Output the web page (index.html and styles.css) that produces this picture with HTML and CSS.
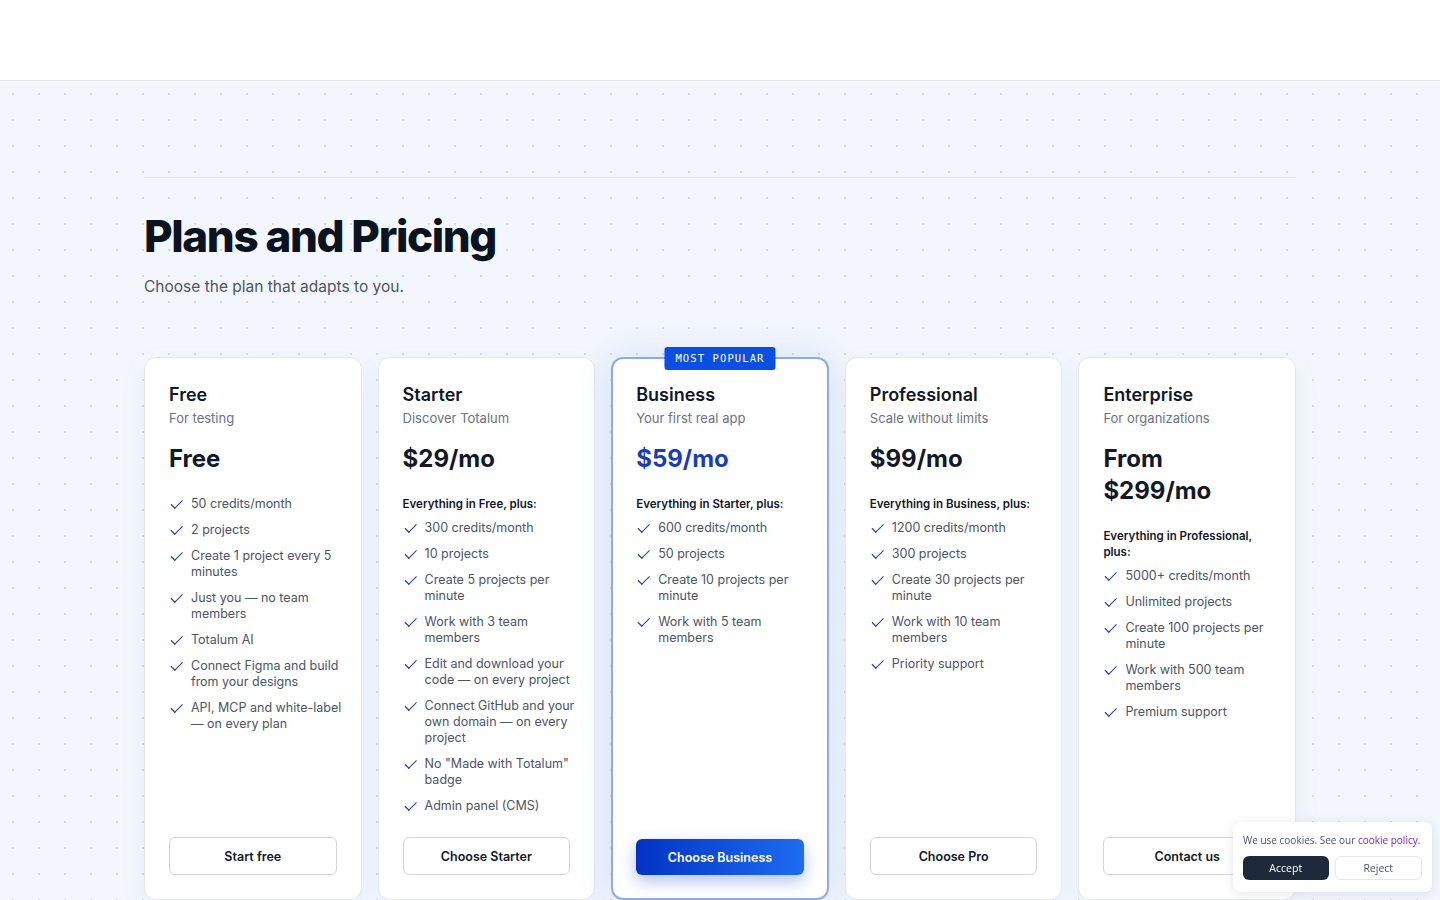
FILE: index.html
```html
<!DOCTYPE html>
<html lang="en">
<head>
    <meta charset="UTF-8">
    <meta name="viewport" content="width=device-width, initial-scale=1.0">
    <title>Plans and Pricing</title>
    <link rel="stylesheet" href="styles.css">
</head>
<body>
    <header class="topbar"></header>

    <main class="pricing">
        <div class="pricing-inner">
            <h1 class="pricing-title">Plans and Pricing</h1>
            <p class="pricing-lead">Choose the plan that adapts to you.</p>

            <div class="plans">
                <div class="plan">
                    <h2 class="plan-name">Free</h2>
                    <p class="plan-desc">For testing</p>
                    <p class="plan-price">Free</p>
                    <ul class="features">
                        <li>50 credits/month</li>
                        <li>2 projects</li>
                        <li>Create 1 project every 5 minutes</li>
                        <li>Just you — no team members</li>
                        <li>Totalum AI</li>
                        <li>Connect Figma and build from your designs</li>
                        <li>API, MCP and white-label — on every plan</li>
                    </ul>
                    <button class="plan-btn">Start free</button>
                </div>

                <div class="plan">
                    <h2 class="plan-name">Starter</h2>
                    <p class="plan-desc">Discover Totalum</p>
                    <p class="plan-price">$29/mo</p>
                    <p class="features-head">Everything in Free, plus:</p>
                    <ul class="features">
                        <li>300 credits/month</li>
                        <li>10 projects</li>
                        <li>Create 5 projects per minute</li>
                        <li>Work with 3 team members</li>
                        <li>Edit and download your code — on every project</li>
                        <li>Connect GitHub and your own domain — on every project</li>
                        <li>No "Made with Totalum" badge</li>
                        <li>Admin panel (CMS)</li>
                    </ul>
                    <button class="plan-btn">Choose Starter</button>
                </div>

                <div class="plan plan-popular">
                    <span class="plan-badge">MOST POPULAR</span>
                    <h2 class="plan-name">Business</h2>
                    <p class="plan-desc">Your first real app</p>
                    <p class="plan-price">$59/mo</p>
                    <p class="features-head">Everything in Starter, plus:</p>
                    <ul class="features">
                        <li>600 credits/month</li>
                        <li>50 projects</li>
                        <li>Create 10 projects per minute</li>
                        <li>Work with 5 team members</li>
                    </ul>
                    <button class="plan-btn plan-btn-primary">Choose Business</button>
                </div>

                <div class="plan">
                    <h2 class="plan-name">Professional</h2>
                    <p class="plan-desc">Scale without limits</p>
                    <p class="plan-price">$99/mo</p>
                    <p class="features-head">Everything in Business, plus:</p>
                    <ul class="features">
                        <li>1200 credits/month</li>
                        <li>300 projects</li>
                        <li>Create 30 projects per minute</li>
                        <li>Work with 10 team members</li>
                        <li>Priority support</li>
                    </ul>
                    <button class="plan-btn">Choose Pro</button>
                </div>

                <div class="plan">
                    <h2 class="plan-name">Enterprise</h2>
                    <p class="plan-desc">For organizations</p>
                    <p class="plan-price">From $299/mo</p>
                    <p class="features-head">Everything in Professional, plus:</p>
                    <ul class="features">
                        <li>5000+ credits/month</li>
                        <li>Unlimited projects</li>
                        <li>Create 100 projects per minute</li>
                        <li>Work with 500 team members</li>
                        <li>Premium support</li>
                    </ul>
                    <button class="plan-btn">Contact us</button>
                </div>
            </div>
        </div>
    </main>

    <div class="cookie-banner">
        <p>We use cookies. See our <a href="#">cookie policy.</a></p>
        <div class="cookie-actions">
            <button class="cookie-accept">Accept</button>
            <button class="cookie-reject">Reject</button>
        </div>
    </div>
</body>
</html>
```

FILE: styles.css
```css
body {
    margin: 0;
    font-family: Inter, 'Noto Sans', sans-serif;
    color: #0f172a;
    background-color: #f3f7fd;
}
.topbar {
    height: 80px;
    background-color: #fff;
    border-bottom: 1px solid #e2e8f0;
}
.pricing {
    min-height: 819px;
    background-color: #f3f7fd;
    /* dotted grid */
    background-image: radial-gradient(circle, #d2d9e4 1px, transparent 1.4px);
    background-size: 26px 26px;
}
.pricing-inner {
    width: 1152px;
    margin: 0 auto;
    padding-top: 96px;
}
.pricing-title {
    margin: 0;
    padding-top: 30px;
    border-top: 1px solid #dfe4eb;
    font-size: 44px;
    line-height: 56px;
    font-weight: 800;
    letter-spacing: -1.4px;
    color: #0b1220;
}
.pricing-lead {
    margin: 11px 0 0;
    font-size: 15.5px;
    line-height: 24px;
    color: #4b5563;
}
.plans {
    display: grid;
    grid-template-columns: repeat(5, 1fr);
    gap: 16px;
    margin-top: 58px;
}
.plan {
    position: relative;
    display: flex;
    flex-direction: column;
    padding: 25px 24px 24px;
    background-color: #fff;
    border: 1px solid #e5e7eb;
    border-radius: 12px;
    box-shadow: 0 8px 30px rgba(37, 70, 160, 0.05);
}
.plan-popular {
    border: 2px solid #8ea9ee;
    padding: 24px 23px 23px;
    box-shadow: 0 0 40px rgba(37, 90, 230, 0.14);
}
.plan-badge {
    position: absolute;
    top: -12px;
    left: 50%;
    transform: translateX(-50%);
    padding: 0 11px;
    height: 23px;
    line-height: 23px;
    background-color: #0b4fe2;
    color: #fff;
    border-radius: 3px;
    font-family: 'DejaVu Sans Mono', 'Liberation Mono', monospace;
    font-size: 10.5px;
    letter-spacing: 1.1px;
    white-space: nowrap;
}
.plan-name {
    margin: 0;
    font-size: 18px;
    line-height: 24px;
    font-weight: 600;
    color: #111827;
}
.plan-desc {
    margin: 3px 0 0;
    font-size: 13px;
    line-height: 16px;
    color: #6b7280;
}
.plan-price {
    margin: 17px 0 0;
    font-size: 24px;
    line-height: 32px;
    font-weight: 700;
    color: #111827;
}
.plan-popular .plan-price {
    color: #1a3db5;
}
.features-head {
    margin: 21px 0 0;
    font-size: 11.5px;
    line-height: 16px;
    font-weight: 600;
    color: #111827;
}
.features {
    list-style: none;
    margin: 8px -8px 23px 0;
    padding: 0;
    display: flex;
    flex-direction: column;
    gap: 10px;
}
.plan > .plan-price + .features {
    margin-top: 21px;
}
.features li {
    position: relative;
    padding-left: 22px;
    font-size: 12.5px;
    line-height: 16px;
    color: #4b5563;
}
.features li::before {
    content: "";
    position: absolute;
    left: 2px;
    top: 3px;
    width: 9px;
    height: 5px;
    border-left: 1.3px solid #1e40af;
    border-bottom: 1.3px solid #1e40af;
    transform: rotate(-45deg) translate(0, 1px) scaleX(1.15);
}
.plan-btn {
    margin-top: auto;
    height: 38px;
    width: 100%;
    background-color: #fff;
    border: 1px solid #d1d5db;
    border-radius: 6px;
    font-family: inherit;
    font-size: 12.5px;
    font-weight: 600;
    color: #111827;
    cursor: pointer;
}
.plan-btn-primary {
    height: 36px;
    border: none;
    color: #fff;
    background: linear-gradient(90deg, #0433c4, #1d6cf1);
    box-shadow: 0 6px 16px rgba(29, 78, 216, 0.35);
}
.cookie-banner {
    position: fixed;
    right: 8px;
    bottom: 8px;
    width: 179px;
    padding: 10px 10px 12px;
    background-color: #fff;
    border-radius: 8px;
    box-shadow: 0 2px 12px rgba(15, 23, 42, 0.1);
    font-family: 'Open Sans', sans-serif;
}
.cookie-banner p {
    margin: 0;
    font-size: 10px;
    line-height: 16px;
    color: #4b5563;
    white-space: nowrap;
}
.cookie-banner a {
    color: #7e22ce;
    text-decoration: none;
}
.cookie-actions {
    display: flex;
    gap: 6px;
    margin-top: 8px;
}
.cookie-actions button {
    flex: 1;
    height: 24px;
    border-radius: 6px;
    font-family: inherit;
    font-size: 10.5px;
    cursor: pointer;
}
.cookie-accept {
    background-color: #1e293b;
    color: #fff;
    border: none;
}
.cookie-reject {
    background-color: #fff;
    color: #4b5563;
    border: 1px solid #e5e7eb;
}
```
